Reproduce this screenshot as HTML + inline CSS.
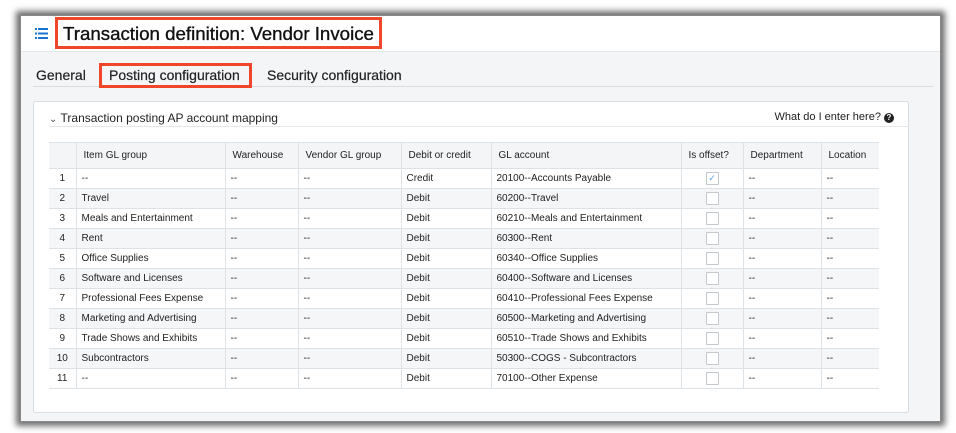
<!DOCTYPE html>
<html><head><meta charset="utf-8"><style>
*{box-sizing:border-box;margin:0;padding:0}
body{width:956px;height:433px;background:#fff;font-family:"Liberation Sans",Arial,sans-serif;position:relative;overflow:hidden;color:#222}
.win{position:absolute;left:20px;top:15px;width:921px;height:407px;background:#f3f5f7;box-shadow:0 0 6px 4px #6f6f6f;border:1px solid #888}
.hdr{position:absolute;left:0;top:0;width:100%;height:36px;background:#fff;border-bottom:1px solid #e4e7ea}
.title{position:absolute;left:34px;top:1px;height:32px;width:327px;border:3px solid #f0462a;padding:0 5px;font-size:18.7px;-webkit-text-stroke:0.35px #111;line-height:27px;color:#111;white-space:nowrap}
.menu{position:absolute;left:14px;top:12px}
.tabs{position:absolute;left:12px;top:50px;width:900px;height:21px;border-bottom:1px solid #d8dde2;font-size:14px;-webkit-text-stroke:0.2px #222}
.tab{position:absolute;top:0;line-height:18px}
.ptab{position:absolute;left:78px;top:47px;width:153px;height:25px;border:3px solid #f0462a}
.card{position:absolute;left:12px;top:85px;width:876px;height:312px;background:#fff;border:1px solid #d8dde2;border-radius:3px}
.sec{position:absolute;left:15px;top:9px;width:860px;height:16px;border-bottom:1px solid #e4e7ea;font-size:12px}
.help{position:absolute;right:14px;top:9px;font-size:11px}
table{position:absolute;left:15px;top:40px;border-collapse:collapse;font-size:10px}
td,th{height:20px;border-bottom:1px solid #dde2e6;border-left:1px solid #dde2e6;padding:0 5px;text-align:left;font-weight:normal;white-space:nowrap}
th{height:26px;background:#f3f5f7;border-top:1px solid #dde2e6;padding-left:7px}
tr td:first-child,tr th:first-child{border-left:none;text-align:center}
tr:nth-child(odd) td{background:#f4f6f8}
.cb{display:inline-block;width:13px;height:13px;border:1px solid #c4c9ce;background:#fff;vertical-align:middle;border-radius:1px;font-size:9px;color:#5aa0e6;line-height:11px;text-align:center}
</style></head><body>
<div class="win">
<div class="hdr">
<svg class="menu" width="13" height="11" viewBox="0 0 13 11"><g fill="#1a73d0"><rect x="0" y="0" width="2" height="2"/><rect x="3" y="0" width="10" height="2"/><rect x="0" y="4.5" width="2" height="2"/><rect x="3" y="4.5" width="10" height="2"/><rect x="0" y="9" width="2" height="2"/><rect x="3" y="9" width="10" height="2"/></g></svg>
<div class="title">Transaction definition: Vendor Invoice</div>
</div>
<div class="tabs"><span class="tab" style="left:3px">General</span><span class="tab" style="left:76px">Posting configuration</span><span class="tab" style="left:234px">Security configuration</span></div>
<div class="ptab"></div>
<div class="card">
<div class="sec"><span style="font-size:10px;color:#555">&#8964;</span> Transaction posting AP account mapping</div>
<div class="help">What do I enter here? <span style="display:inline-block;width:10px;height:10px;border-radius:50%;background:#222;color:#fff;font-size:8px;text-align:center;line-height:10px;font-weight:bold">?</span></div>
<table>
<tr><th style="width:27px"></th><th style="width:149px">Item GL group</th><th style="width:73px">Warehouse</th><th style="width:103px">Vendor GL group</th><th style="width:90px">Debit or credit</th><th style="width:190px">GL account</th><th style="width:62px">Is offset?</th><th style="width:78px">Department</th><th style="width:58px">Location</th></tr>
<tr><td>1</td><td>--</td><td>--</td><td>--</td><td>Credit</td><td>20100--Accounts Payable</td><td style="text-align:center"><span class="cb">✓</span></td><td>--</td><td>--</td></tr>
<tr><td>2</td><td>Travel</td><td>--</td><td>--</td><td>Debit</td><td>60200--Travel</td><td style="text-align:center"><span class="cb"></span></td><td>--</td><td>--</td></tr>
<tr><td>3</td><td>Meals and Entertainment</td><td>--</td><td>--</td><td>Debit</td><td>60210--Meals and Entertainment</td><td style="text-align:center"><span class="cb"></span></td><td>--</td><td>--</td></tr>
<tr><td>4</td><td>Rent</td><td>--</td><td>--</td><td>Debit</td><td>60300--Rent</td><td style="text-align:center"><span class="cb"></span></td><td>--</td><td>--</td></tr>
<tr><td>5</td><td>Office Supplies</td><td>--</td><td>--</td><td>Debit</td><td>60340--Office Supplies</td><td style="text-align:center"><span class="cb"></span></td><td>--</td><td>--</td></tr>
<tr><td>6</td><td>Software and Licenses</td><td>--</td><td>--</td><td>Debit</td><td>60400--Software and Licenses</td><td style="text-align:center"><span class="cb"></span></td><td>--</td><td>--</td></tr>
<tr><td>7</td><td>Professional Fees Expense</td><td>--</td><td>--</td><td>Debit</td><td>60410--Professional Fees Expense</td><td style="text-align:center"><span class="cb"></span></td><td>--</td><td>--</td></tr>
<tr><td>8</td><td>Marketing and Advertising</td><td>--</td><td>--</td><td>Debit</td><td>60500--Marketing and Advertising</td><td style="text-align:center"><span class="cb"></span></td><td>--</td><td>--</td></tr>
<tr><td>9</td><td>Trade Shows and Exhibits</td><td>--</td><td>--</td><td>Debit</td><td>60510--Trade Shows and Exhibits</td><td style="text-align:center"><span class="cb"></span></td><td>--</td><td>--</td></tr>
<tr><td>10</td><td>Subcontractors</td><td>--</td><td>--</td><td>Debit</td><td>50300--COGS - Subcontractors</td><td style="text-align:center"><span class="cb"></span></td><td>--</td><td>--</td></tr>
<tr><td>11</td><td>--</td><td>--</td><td>--</td><td>Debit</td><td>70100--Other Expense</td><td style="text-align:center"><span class="cb"></span></td><td>--</td><td>--</td></tr>
</table>
</div>
</div>
</body></html>
